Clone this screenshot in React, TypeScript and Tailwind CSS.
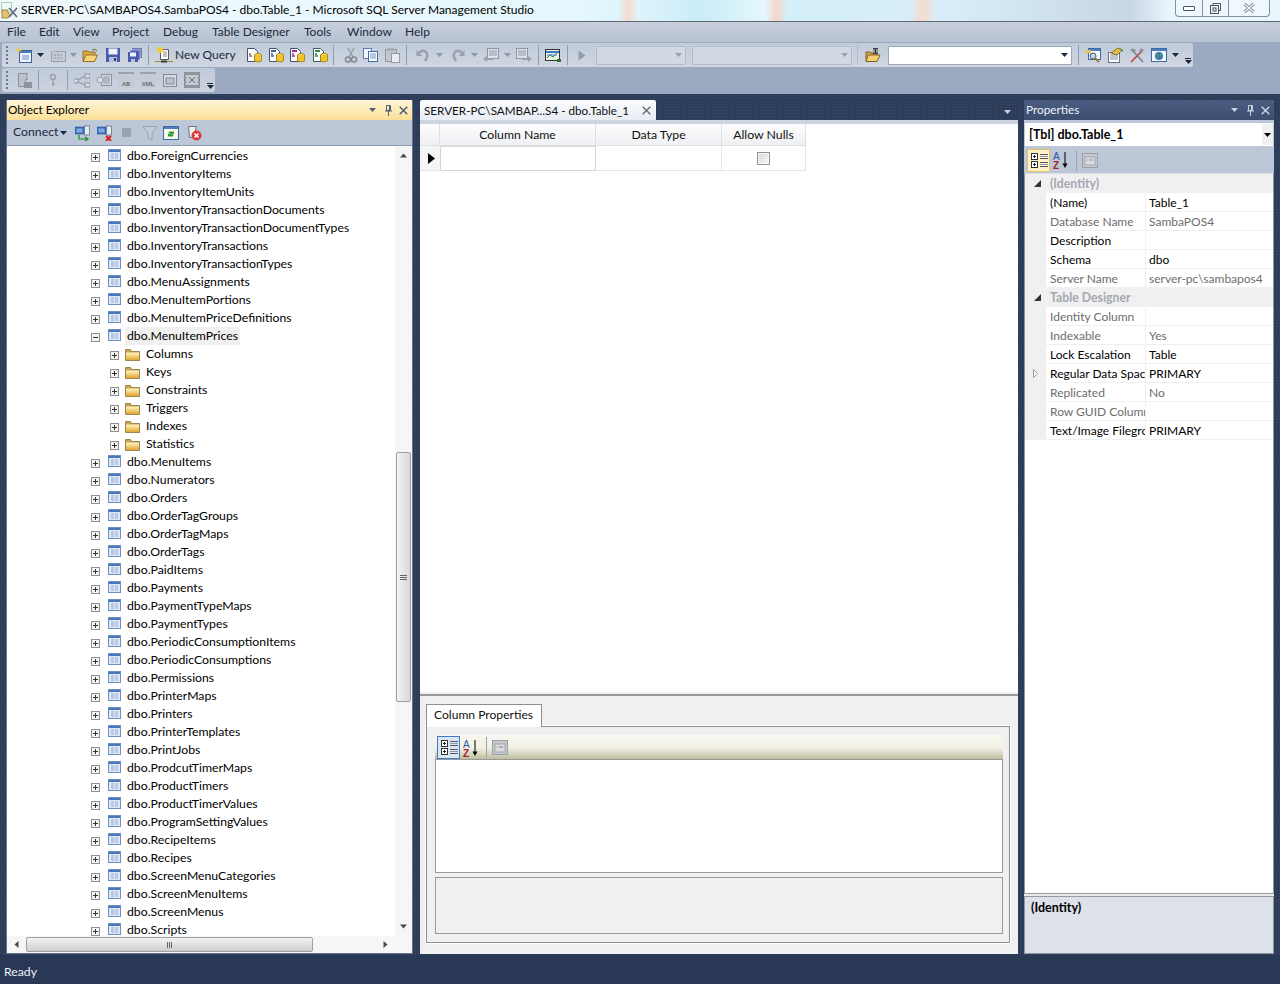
import React from 'react';

const tables: [string, boolean?][] = [
  ['ForeignCurrencies'], ['InventoryItems'], ['InventoryItemUnits'], ['InventoryTransactionDocuments'], ['InventoryTransactionDocumentTypes'],
  ['InventoryTransactions'], ['InventoryTransactionTypes'], ['MenuAssignments'], ['MenuItemPortions'], ['MenuItemPriceDefinitions'], ['MenuItemPrices', true],
];
const folders = ['Columns', 'Keys', 'Constraints', 'Triggers', 'Indexes', 'Statistics'];
const tables2 = ['MenuItems', 'Numerators', 'Orders', 'OrderTagGroups', 'OrderTagMaps', 'OrderTags', 'PaidItems', 'Payments', 'PaymentTypeMaps', 'PaymentTypes', 'PeriodicConsumptionItems', 'PeriodicConsumptions', 'Permissions', 'PrinterMaps', 'Printers', 'PrinterTemplates', 'PrintJobs', 'ProdcutTimerMaps', 'ProductTimers', 'ProductTimerValues', 'ProgramSettingValues', 'RecipeItems', 'Recipes', 'ScreenMenuCategories', 'ScreenMenuItems', 'ScreenMenus', 'Scripts'];

const props: [string, string, boolean, boolean?][] = [
  ['(Name)', 'Table_1', true], ['Database Name', 'SambaPOS4', false], ['Description', '', true], ['Schema', 'dbo', true], ['Server Name', 'server-pc\\sambapos4', false],
];
const props2: [string, string, boolean, boolean?][] = [
  ['Identity Column', '', false], ['Indexable', 'Yes', false], ['Lock Escalation', 'Table', true], ['Regular Data Space', 'PRIMARY', true, true], ['Replicated', 'No', false], ['Row GUID Column', '', false], ['Text/Image Filegroup', 'PRIMARY', true],
];

const Box = ({ open }: { open?: boolean }) => (
  <svg width="9" height="9" viewBox="0 0 9 9" className="shrink-0 mt-[2px]">
    <rect x=".5" y=".5" width="8" height="8" fill="#f4f4f4" stroke="#8f8f8f" />
    <path d={open ? 'M2 4.500h5' : 'M2 4.500h5M4.500 2v5'} stroke="#333" />
  </svg>
);
const TableIco = () => (
  <svg width="13" height="12" viewBox="0 0 13 12" className="shrink-0 -mt-[2px] block">
    <rect x=".5" y=".5" width="12" height="11" fill="#dde7f5" stroke="#6f8fc0" />
    <rect x="1" y="1" width="11" height="2" fill="#4a78bd" />
    <path d="M3 5h3M7 5h3M3 7h3M7 7h3M3 9h3M7 9h3" stroke="#92abd2" />
  </svg>
);
const FolderIco = () => (
  <svg width="15" height="13" viewBox="0 0 15 13" className="shrink-0 block">
    <defs><linearGradient id="fg" x1="0" y1="0" x2="0" y2="1"><stop offset="0" stopColor="#fff6c4" /><stop offset="1" stopColor="#e0a62e" /></linearGradient></defs>
    <path d="M.5 12.500V1.500h5l1 2h8v9z" fill="#c9a24a" stroke="#9b8550" />
    <path d="M1 4.500h13V12H1z" fill="url(#fg)" />
  </svg>
);

const Tri = ({ c = '#1b293e', className = '' }: { c?: string; className?: string }) => (
  <svg width="7" height="4" viewBox="0 0 7 4" className={`shrink-0 ${className}`}><path d="M0 0h7L3.500 4z" fill={c} /></svg>
);
const Sep = ({ cls }: { cls: string }) => <div className={`w-px h-[20px] bg-[#8e9bb0] shrink-0 ${cls}`} />;
const Grip = () => (
  <div className="w-[3px] h-[18px] ml-[4px] shrink-0 flex flex-col justify-between">
    {[0, 1, 2, 3, 4].map((i) => <div key={i} className="w-[2px] h-[2px] bg-[#6d7b92]" />)}
  </div>
);
const Overflow = ({ cls = '' }: { cls?: string }) => (
  <div className={`w-[8px] flex flex-col items-center gap-[1px] self-end mb-[3px] shrink-0 ${cls}`}>
    <div className="w-[6px] h-px bg-[#1b293e]" />
    <Tri />
  </div>
);

type I = { cls?: string };
const S = ({ cls = '', w = 16, h = 16, children }: I & { w?: number; h?: number; children: React.ReactNode }) => (
  <svg width={w} height={h} viewBox={`0 0 ${w} ${h}`} className={`shrink-0 ${cls}`}>{children}</svg>
);
const NewProj = ({ cls }: I) => <S cls={cls}><rect x="3.500" y="3.500" width="12" height="12" fill="#eef3fa" stroke="#3b5f97" /><rect x="4" y="4" width="11" height="2" fill="#4f7cc0" /><path d="M6 8h7v5H6z" fill="#a9c1e4" /><path d="M3 0l1 2 2 1-2 1-1 2-1-2-2-1 2-1z" fill="#f4c430" /></S>;
const GridD = ({ cls }: I) => <S cls={cls}><rect x="1.500" y="4.500" width="14" height="10" fill="#c5cbd6" stroke="#9a9fa8" /><path d="M4 8h9M4 11h9" stroke="#8d939d" strokeDasharray="2 1" /><path d="M3 1l1 2 2 1-2 1-1-1-1 1-1-1 1-1z" fill="#c9ccd1" /></S>;
const Open = ({ cls }: I) => <S cls={cls}><path d="M1 14V4h5l1 1h6v3" fill="#dca93c" stroke="#94702a" /><path d="M1 14.500 4 8h11.500l-3 6.500z" fill="#f6d778" stroke="#94702a" /><path d="M10 3q3-2 5 1" stroke="#4a7b3a" fill="none" /></S>;
const Save = ({ cls }: I) => <S cls={cls}><rect x="1" y="1" width="14" height="14" fill="#4a58ad" /><rect x="3.500" y="1.500" width="9" height="6" fill="#eef1fa" /><rect x="4" y="10" width="8" height="5" fill="#b7bdd6" /><rect x="9" y="11" width="2" height="3" fill="#333a73" /></S>;
const SaveAll = ({ cls }: I) => <S cls={cls}><rect x="5" y="1" width="10" height="10" fill="#6f7cba" /><rect x="3" y="3" width="10" height="10" fill="#5262ae" stroke="#eef1fa" strokeWidth=".5" /><rect x="1" y="5" width="10" height="10" fill="#4a58ad" /><rect x="3" y="5.500" width="6" height="4" fill="#eef1fa" /><rect x="4" y="12" width="4" height="3" fill="#b7bdd6" /></S>;
const NewQ = ({ cls }: I) => <S w={18} h={18} cls={cls}><path d="M5.500 3.500h8v10h-8z" fill="#fff" stroke="#5b5b5b" /><path d="M8 6h4M8 8h4M8 10h4" stroke="#888" /><circle cx="5" cy="4" r="3" fill="#f7c831" /><path d="M0 15.500h18" stroke="#a8882c" /><path d="M6 15.500h6" stroke="#3d3d3d" strokeWidth="2" /></S>;
const DocDb = ({ cls, c, t }: I & { c: string; t?: boolean }) => <S cls={cls}><path d="M1.500 1.500h7l3 3v10h-10z" fill="#fff" stroke="#46536b" />{t ? <path d="M3 4h5" stroke={c} strokeWidth="2" /> : null}<path d="M3 7h2M3 9h3" stroke={c} strokeWidth="1.500" /><ellipse cx="12" cy="8" rx="3.500" ry="1.500" fill="#f9df6f" stroke="#a88b22" /><path d="M8.500 8v6q3.500 2 7 0V8" fill="#efc52d" stroke="#a88b22" /></S>;
const Cut = ({ cls }: I) => <S cls={cls}><path d="M5 1l5 9M11 1 6 10" stroke="#9aa0aa" strokeWidth="1.500" /><circle cx="5" cy="12.500" r="2.500" fill="none" stroke="#838a96" strokeWidth="1.500" /><circle cx="11" cy="12.500" r="2.500" fill="none" stroke="#838a96" strokeWidth="1.500" /></S>;
const Copy = ({ cls }: I) => <S cls={cls}><rect x="1.500" y="1.500" width="8" height="10" fill="#f1f5fb" stroke="#5b7fb5" /><rect x="6.500" y="4.500" width="9" height="10" fill="#fff" stroke="#3f69a8" /><path d="M8 7h6M8 9h6M8 11h6" stroke="#6f8ebe" /></S>;
const Paste = ({ cls }: I) => <S cls={cls}><rect x="1.500" y="2.500" width="11" height="12" fill="#c2c7ce" stroke="#90959d" /><rect x="4" y="1" width="6" height="3" fill="#a9aeb6" /><rect x="7.500" y="6.500" width="8" height="9" fill="#e8ebef" stroke="#959aa2" /></S>;
const Undo = ({ cls, flip }: I & { flip?: boolean }) => <S cls={`${cls} ${flip ? '-scale-x-100' : ''}`}><path d="M5 7 1.500 3 1.500 9h6z" fill="#98a0ad" /><path d="M4 6q4-4 7-1t-1 9" fill="none" stroke="#98a0ad" strokeWidth="2.500" /></S>;
const ListL = ({ cls, flip }: I & { flip?: boolean }) => <S cls={`${cls} ${flip ? '-scale-x-100' : ''}`}><rect x="4.500" y="1.500" width="11" height="10" fill="#dfe3e9" stroke="#8f96a3" /><path d="M6 4h8M6 6h8M6 8h8" stroke="#8f96a3" /><path d="M0 12l4-3v2h6v2H4v2z" fill="#98a0ad" /></S>;
const Chart = ({ cls }: I) => <S cls={cls}><rect x=".5" y="2.500" width="14" height="11" fill="#e9f4e5" stroke="#333" /><path d="M1 5h13" stroke="#3b7bc6" strokeWidth="2" /><path d="M2 11l3-3 3 2 4-4" stroke="#2d8c3c" fill="none" /><path d="M2 8h10" stroke="#3b7bc6" /><path d="M12 12h4v3h-4z" fill="#2d6c2d" /></S>;
const Play = ({ cls }: I) => <svg width="8" height="11" viewBox="0 0 8 11" className={`shrink-0 ${cls}`}><path d="M.5.500 7.500 5.500.500 10.500z" fill="#929cac" /></svg>;
const Combo = ({ cls, white }: I & { white?: boolean }) => (
  <div className={`h-[19px] border flex items-center justify-end pr-[2px] rounded-[1px] shrink-0 ${white ? 'bg-white border-[#9aa7bd]' : 'bg-[#d2d9e4] border-[#b2bccd]'} ${cls}`}>
    <Tri c={white ? '#1b293e' : '#98a2b2'} className="mr-[1px]" />
  </div>
);
const FolderFind = ({ cls }: I) => <S cls={cls}><path d="M1 14V5h4l1 1h6v8z" fill="#dca93c" stroke="#7d5e24" /><path d="M1 14.500 3 8h12l-3 6.500z" fill="#f2cf70" stroke="#7d5e24" /><path d="M8 1h5v6H8z" fill="#3a3a3a" /><path d="M9 2v4M12 2v4" stroke="#d8d8d8" /></S>;
const FindW = ({ cls }: I) => <S cls={cls}><rect x="3.500" y="1.500" width="12" height="11" fill="#f5f7fb" stroke="#3d6aa8" /><rect x="4" y="2" width="11" height="2" fill="#4f7cc0" /><path d="M0 3h6v3H0z" fill="#e6be5b" /><circle cx="8" cy="9" r="3" fill="#bcd7ef" stroke="#46586f" /><path d="M10 11l4 4" stroke="#a27a28" strokeWidth="2" /></S>;
const PropsI = ({ cls }: I) => <S cls={cls}><rect x="1.500" y="5.500" width="11" height="10" fill="#fff" stroke="#6b7280" /><path d="M3 8h8M3 10h8M3 12h8" stroke="#7c8ca5" /><path d="M4 6l7-5 4 2-5 5z" fill="#e5bd4f" stroke="#8a6c1f" /><path d="M12 1l4 2v2z" fill="#3c8d3c" /></S>;
const Tools = ({ cls }: I) => <S cls={cls}><path d="M2 15 12 5" stroke="#c9342d" strokeWidth="1.500" /><path d="M14 15 5 5" stroke="#777d86" strokeWidth="1.500" /><path d="M1 3q3-3 6 0l-2 3zM15 3l-3-2-2 3 3 2z" fill="#8a9099" /></S>;
const Globe = ({ cls }: I) => <S cls={cls}><rect x=".5" y="1.500" width="15" height="13" fill="#f4f7fb" stroke="#3d6aa8" /><rect x="1" y="2" width="14" height="2" fill="#4f7cc0" /><circle cx="8" cy="9" r="4" fill="#3b76bd" /><path d="M6 7q2 0 2 2t-2 2zM9 6l2 2-2 1z" fill="#54a94c" /></S>;

const Toolbar1 = () => (
  <div className="h-[24px] w-[1191px] ml-[2px] flex items-center bg-[linear-gradient(#c0cad9,#d0d7e2)] rounded-[2px]">
    <Grip />
    <NewProj cls="ml-[7px]" /><Tri className="ml-[5px]" />
    <GridD cls="ml-[6px]" /><Tri c="#8d97a7" className="ml-[4px]" />
    <Open cls="ml-[5px]" /><Save cls="ml-[7px]" /><SaveAll cls="ml-[6px]" />
    <Sep cls="ml-[5px]" />
    <NewQ cls="ml-[6px]" />
    <span className="ml-[2px] w-[59px] text-[#1b293e] text-[12px] whitespace-nowrap">New Query</span>
    <DocDb c="#777" cls="ml-[12px]" /><DocDb c="#3a5fb5" t cls="ml-[6px]" /><DocDb c="#a0329a" t cls="ml-[5px]" /><DocDb c="#2e8b3c" t cls="ml-[7px]" />
    <Sep cls="ml-[5px]" />
    <Cut cls="ml-[9px]" /><Copy cls="ml-[3px]" /><Paste cls="ml-[6px]" />
    <Sep cls="ml-[6px]" />
    <Undo cls="ml-[8px]" /><Tri c="#8d97a7" className="ml-[5px]" />
    <Undo flip cls="ml-[7px]" /><Tri c="#8d97a7" className="ml-[5px]" />
    <ListL cls="ml-[5px]" /><Tri c="#8d97a7" className="ml-[5px]" />
    <ListL flip cls="ml-[5px]" />
    <Sep cls="ml-[6px]" />
    <Chart cls="ml-[6px]" />
    <Sep cls="ml-[6px]" />
    <Play cls="ml-[10px]" />
    <Combo cls="ml-[10px] w-[90px]" />
    <Combo cls="ml-[6px] w-[160px]" />
    <Sep cls="ml-[5px] bg-[#b2bccd]" />
    <FolderFind cls="ml-[7px]" />
    <Combo white cls="ml-[7px] w-[184px]" />
    <Sep cls="ml-[6px]" />
    <FindW cls="ml-[6px]" /><PropsI cls="ml-[6px]" /><Tools cls="ml-[6px]" /><Globe cls="ml-[6px]" /><Tri className="ml-[5px]" />
    <Overflow cls="ml-[5px]" />
  </div>
);

const Dis = ({ children, cls }: I & { children: React.ReactNode }) => (
  <div className={`w-[16px] h-[16px] bg-[#c6ccd7] border-t-2 border-[#9ba2ad] flex items-end justify-center font-['Liberation_Sans'] text-[6px] leading-[7px] text-[#444] shrink-0 ${cls}`}>{children}</div>
);
const Toolbar2 = () => (
  <div className="h-[24px] w-[213px] ml-[2px] mt-[1px] flex items-center bg-[linear-gradient(#c0cad9,#ccd3df)] rounded-[2px]">
    <Grip />
    <S cls="ml-[7px]"><path d="M2.500 1.500h9q-2 3 0 6h-2v7h-7z" fill="#bbc2cd" stroke="#8b929d" /><rect x="8" y="10" width="8" height="6" fill="#8d949e" /></S>
    <Sep cls="ml-[6px]" />
    <S cls="ml-[6px]"><circle cx="8" cy="5" r="2.500" fill="none" stroke="#9aa2ae" strokeWidth="1.500" /><path d="M8 7v7M8 12h2" stroke="#9aa2ae" strokeWidth="1.500" /></S>
    <Sep cls="ml-[6px]" />
    <S cls="ml-[6px]"><rect x="0" y="7" width="4" height="4" fill="#dde" stroke="#8b929d" /><rect x="11" y="2" width="5" height="4" fill="#dde" stroke="#8b929d" /><rect x="11" y="11" width="5" height="4" fill="#dde" stroke="#8b929d" /><path d="M4 8l7-4M4 10l7 3" stroke="#8b929d" /></S>
    <S cls="ml-[6px]"><rect x="5.500" y="2.500" width="10" height="11" fill="#d7dce4" stroke="#8b929d" /><path d="M7 5h7M7 7h7M7 9h7M7 11h7" stroke="#8b929d" /><circle cx="4" cy="8" r="3" fill="#d7dce4" stroke="#9aa2ae" /></S>
    <Dis cls="ml-[6px]">AB</Dis>
    <Dis cls="ml-[6px]">XML</Dis>
    <S cls="ml-[6px]"><rect x="1.500" y="2.500" width="13" height="12" fill="#d4d9e1" stroke="#858c97" /><path d="M4 6h8v6H4z" fill="#bcc3ce" stroke="#858c97" /></S>
    <S cls="ml-[6px]"><rect x="0" y="0" width="16" height="16" fill="#8d949e" /><rect x="2" y="3" width="12" height="10" fill="#c4cad4" /><path d="M5 5l6 6M11 5l-6 6" stroke="#666" /></S>
    <Overflow cls="ml-[6px]" />
  </div>
);

const PaneBtns = ({ light }: { light?: boolean }) => {
  const c = light ? '#c9d2e1' : '#4f5e76';
  return (
    <div className="flex items-center ml-auto mr-[2px]">
      <Tri c={c} className="mr-[8px]" />
      <svg width="9" height="11" viewBox="0 0 9 11" className="mr-[6px]"><path d="M2.500.500h4v5h-4zM1 6h7M4.500 6v5M5.500 1v4" stroke={c} fill="none" /></svg>
      <svg width="9" height="9" viewBox="0 0 9 9" className="mr-[1px]"><path d="M.7.700l7.600 7.600M8.300.700.700 8.300" stroke={c} strokeWidth="1.500" /></svg>
    </div>
  );
};

const Row = ({ name, open }: { name: string; open?: boolean }) => (
  <div className="h-[18px] pl-[84px] flex items-center shrink-0">
    <Box open={open} />
    <div className="ml-[8px]"><TableIco /></div>
    <span className={`ml-[4px] h-[18px] text-[#000] px-[2px] whitespace-nowrap leading-[18px] ${open ? 'bg-[#f0f0f0]' : ''}`}>dbo.{name}</span>
  </div>
);
const Arrow = ({ d, cls = '' }: { d: string; cls?: string }) => (
  <svg width="7" height="7" viewBox="0 0 7 7" className={cls}><path d={d} fill="#4a4a4a" /></svg>
);
const Monitor = () => (
  <>
    <rect x="0" y="2" width="9" height="7" fill="#3c6fc0" stroke="#2a4d86" strokeWidth=".6" />
    <rect x="1.500" y="3.500" width="6" height="4" fill="#7fa8e0" />
    <rect x="9.500" y="1" width="5" height="9" fill="#e4eaf3" stroke="#57657c" strokeWidth=".7" />
  </>
);

const ObjectExplorer = () => (
  <section className="w-[407px] ml-[6px] flex flex-col shrink-0 border-x border-b border-[#8e9bb0]/60">
    <div className="h-[20px] flex items-center pl-[1px] pr-[1px] bg-[linear-gradient(#fff6d8,#fbdf96)] text-black">
      <span className="text-[11.75px]">Object Explorer</span> <PaneBtns />
    </div>
    <div className="h-[26px] bg-[#bcc7d8] flex items-center pl-[6px] border-b border-[#8e9bb0]">
      <span className="text-[#1b293e] w-[47px] mb-[2px] whitespace-nowrap">Connect</span><Tri />
      <S cls="ml-[8px]"><Monitor /><path d="M4 10v4h8M10 12l3 2-3 2" stroke="#1f8c2c" strokeWidth="1.200" fill="none" /></S>
      <S cls="ml-[6px]"><Monitor /><path d="M9 11l5 5M14 11l-5 5" stroke="#d51f1f" strokeWidth="2" /></S>
      <div className="w-[9px] h-[9px] bg-[#98a2b2] ml-[9px]" />
      <S cls="ml-[11px]"><path d="M1 1.500h14L10 8v7l-4-2V8z" fill="#c5ccd7" stroke="#98a2b2" /></S>
      <S cls="ml-[5px]"><rect x=".5" y="1.500" width="15" height="13" fill="#f8f8e8" stroke="#3d6aa8" /><rect x="1" y="2" width="14" height="2" fill="#4f7cc0" /><path d="M5 8q2-3 5-1l1-1v3H8zM11 10q-2 3-5 1l-1 1V9h3z" fill="#2d9a37" /></S>
      <S cls="ml-[7px]"><path d="M2.500 1.500h8q-2 4 0 8v3h-7z" fill="#f0f0f0" stroke="#6b7280" /><circle cx="10.500" cy="10.500" r="5" fill="#d93a3a" /><path d="M8.500 8.500l4 4M12.500 8.500l-4 4" stroke="#fff" strokeWidth="1.500" /></S>
    </div>
    <div className="flex-1 flex min-h-0 bg-white">
      <div className="flex-1 overflow-hidden flex flex-col pt-[1px] min-w-0">
        {tables.map(([n, o]) => <Row key={n} name={n} open={o} />)}
        {folders.map((f) => (
          <div key={f} className="h-[18px] pl-[103px] flex items-center shrink-0">
            <Box /><div className="ml-[6px]"><FolderIco /></div>
            <span className="ml-[6px] h-[18px] leading-[18px] whitespace-nowrap">{f}</span>
          </div>
        ))}
        {tables2.map((n) => <Row key={n} name={n} />)}
      </div>
      <div className="w-[17px] flex flex-col items-center bg-[#f6f6f6] shrink-0">
        <Arrow d="M3.500 1.500 7 5.500H0z" cls="mt-[6px]" />
        <div className="w-[15px] h-[250px] mt-[293px] bg-[linear-gradient(90deg,#f3f3f3,#d8d8d8)] border border-[#a0a0a0] rounded-[2px] flex flex-col items-center justify-center gap-px">
          <div className="w-[7px] h-px bg-[#666]" /><div className="w-[7px] h-px bg-[#666]" /><div className="w-[7px] h-px bg-[#666]" />
        </div>
        <Arrow d="M0 1.500h7L3.500 5.500z" cls="mt-auto mb-[6px]" />
      </div>
    </div>
    <div className="h-[17px] bg-[#f6f6f6] flex items-center pr-[17px] shrink-0">
      <Arrow d="M1.500 3.500 5.500 0v7z" cls="ml-[6px]" />
      <div className="w-[287px] h-[15px] ml-[6px] bg-[linear-gradient(#f3f3f3,#cfcfcf)] border border-[#a0a0a0] rounded-[2px] flex items-center justify-center gap-px">
        <div className="w-px h-[6px] bg-[#666]" /><div className="w-px h-[6px] bg-[#666]" /><div className="w-px h-[6px] bg-[#666]" />
      </div>
      <Arrow d="M1.500 0 5.500 3.500 1.500 7z" cls="ml-auto mr-[6px]" />
    </div>
  </section>
);

const PropToolbarIcons = ({ blue }: { blue?: boolean }) => (
  <>
    <div className={`w-[23px] h-[23px] flex flex-col justify-center gap-[1px] pl-[3px] border shrink-0 ${blue ? 'border-[#3d79c5] bg-[#dbe6f3]' : 'border-[#e5c365] bg-[#fff2c8]'}`}>
      {[0, 1].map((i) => (
        <div key={i} className="flex items-center gap-[2px]">
          <svg width="7" height="7" viewBox="0 0 7 7"><rect x=".5" y=".5" width="6" height="6" fill="#fff" stroke="#333" /><path d="M2 3.500h3M3.500 2v3" stroke="#222" /></svg>
          <div className="flex flex-col gap-px"><div className="w-[8px] h-px bg-[#556]" /><div className="w-[8px] h-px bg-[#89a]" /><div className="w-[8px] h-px bg-[#556]" /></div>
        </div>
      ))}
    </div>
    <svg width="18" height="20" viewBox="0 0 18 20" className="ml-[1px] shrink-0">
      <text x="2" y="10" fontSize="10" fontFamily="'Liberation Sans'" fill="#2f55a5">A</text>
      <text x="2" y="19" fontSize="10" fontFamily="'Liberation Sans'" fontWeight="700" fill="#a02828">Z</text>
      <path d="M14 2v14" stroke="#000" /><path d="M11.500 13.500h5L14 18z" fill="#000" />
    </svg>
    <div className="w-px h-[21px] bg-[#9aa5b7] ml-[7px] shrink-0" />
    <svg width="16" height="15" viewBox="0 0 16 15" className="ml-[5px] shrink-0"><rect x=".5" y=".5" width="15" height="14" fill="#c5c9cf" stroke="#9a9fa8" /><rect x="3" y="4" width="10" height="8" fill="#d9dce0" stroke="#a4a8ae" /><path d="M5 7h1M7 7h4" stroke="#888" /></svg>
  </>
);

const Document = () => (
  <section className="w-[598px] ml-[7px] flex flex-col shrink-0">
    <div className="h-[20px] flex items-center relative">
      <div className="w-[236px] h-[20px] bg-[linear-gradient(#fbfcfe,#e8edf4)] rounded-t-[2px] flex items-center pl-[4px] whitespace-nowrap text-[#111]">
        <span className="text-[11.7px]">SERVER-PC\SAMBAP...S4 - dbo.Table_1</span>
        <svg width="9" height="9" viewBox="0 0 9 9" className="ml-auto mr-[5px]"><path d="M.7.700l7.600 7.600M8.300.700.700 8.300" stroke="#5e6674" strokeWidth="1.300" /></svg>
      </div>
      <Tri c="#c9d2e1" className="ml-auto mr-[7px] mt-[3px]" />
    </div>
    <div className="h-[4px] bg-[#ced4df]" />
    <div className="h-[568px] bg-white flex flex-col shrink-0">
      <div className="flex h-[22px] text-[#111] text-center">
        <div className="w-[20px] bg-[linear-gradient(#fdfdfd,#eef0f3)] border-r border-b border-[#dcdfe4]" />
        <div className="w-[156px] leading-[22px] bg-[linear-gradient(#fdfdfd,#eef0f3)] border-r border-b border-[#dcdfe4]">Column Name</div>
        <div className="w-[126px] leading-[22px] bg-[linear-gradient(#fdfdfd,#eef0f3)] border-r border-b border-[#dcdfe4]">Data Type</div>
        <div className="w-[84px] leading-[22px] bg-[linear-gradient(#fdfdfd,#eef0f3)] border-r border-b border-[#dcdfe4]">Allow Nulls</div>
      </div>
      <div className="flex h-[25px]">
        <div className="w-[20px] flex items-center pl-[8px] bg-[#f4f5f7] border-b border-[#e6e6e6]">
          <svg width="7" height="11" viewBox="0 0 7 11"><path d="M0 0l7 5.500L0 11z" fill="#000" /></svg>
        </div>
        <div className="w-[156px] border border-[#d5d5d5] rounded-[1px]" />
        <div className="w-[126px] border-r border-b border-[#e6e6e6]" />
        <div className="w-[84px] border-r border-b border-[#e6e6e6] flex items-center justify-center">
          <div className="w-[13px] h-[13px] border border-[#8e8f8f] bg-[linear-gradient(135deg,#d8d8d8,#f6f6f6)] outline outline-1 -outline-offset-2 outline-white/70" />
        </div>
      </div>
    </div>
    <div className="h-[4px] bg-[#f0f0f0] border-b-2 border-[#9a9a9a]" />
    <div className="flex-1 bg-[#f0f0f0] flex flex-col pl-[6px] pr-[8px] pt-[8px] pb-[11px] min-h-0">
      <div className="flex h-[22px] shrink-0">
        <div className="w-[116px] bg-white border border-b-0 border-[#8f8f8f] flex items-center pl-[7px] pb-[2px] text-[#111] text-[12.1px] whitespace-nowrap rounded-t-[1px] relative z-10 -mb-px">Column Properties</div>
      </div>
      <div className="flex-1 border border-[#8f8f8f] outline-1 outline-white flex flex-col pl-[8px] pr-[6px] pt-[8px] pb-[8px] min-h-0">
        <div className="h-[24px] flex items-center pl-[2px] pt-[1px] bg-[linear-gradient(#f9f8f0,#f1f0e2_55%,#bebda0)] rounded-t-[2px] shrink-0">
          <PropToolbarIcons blue />
        </div>
        <div className="h-[114px] bg-white border border-[#9a9a9a] shrink-0" />
        <div className="flex-1 mt-[4px] border border-[#9a9a9a] bg-[#f0f0f0]" />
      </div>
    </div>
  </section>
);

const PropRow = ({ n, v, on, exp }: { n: string; v: string; on: boolean; exp?: boolean }) => {
  const c = on ? 'text-black' : 'text-[#6d6d6d]';
  return (
    <div className="h-[19px] flex text-[12px]">
      <div className="w-[21px] bg-[#f0f0f0] flex items-center justify-center shrink-0">
        {exp ? <svg width="5" height="9" viewBox="0 0 5 9"><path d="M.5.500 4.500 4.500.500 8.500z" fill="#fff" stroke="#9a9a9a" /></svg> : null}
      </div>
      <div className={`w-[100px] pl-[4px] border-r border-b border-[#f0f0f0] overflow-hidden whitespace-nowrap leading-[20px] ${c}`}>{n}</div>
      <div className={`flex-1 pl-[3px] border-b border-[#f0f0f0] whitespace-nowrap leading-[20px] ${c}`}>{v}</div>
    </div>
  );
};
const GroupRow = ({ n }: { n: string }) => (
  <div className="h-[19px] flex items-center bg-[#f0f0f0]">
    <svg width="7" height="7" viewBox="0 0 7 7" className="ml-[9px]"><path d="M7 0v7H0z" fill="#333" /></svg>
    <span className="ml-[9px] font-bold text-[#a3a8b2]">{n}</span>
  </div>
);

const Properties = () => (
  <section className="w-[250px] ml-[6px] flex flex-col shrink-0">
    <div className="h-[20px] flex items-center pl-[2px] pr-[1px] bg-[linear-gradient(#4b5e82,#3c4e70)] text-[#eef2f8]">
      <span className="text-[11.75px]">Properties</span> <PaneBtns light />
    </div>
    <div className="h-[27px] bg-[#bcc7d8] pt-[3px] pb-[1px] px-[1px] shrink-0">
      <div className="h-[23px] bg-white flex items-center pl-[4px] font-bold text-[12.5px] text-black leading-[21px]">
        [Tbl] dbo.Table_1
        <div className="ml-auto w-[11px] h-[21px] bg-[#f0f0f0] flex items-center justify-center"><Tri c="#000" /></div>
      </div>
    </div>
    <div className="h-[26px] bg-[#bcc7d8] flex items-center pl-[3px] shrink-0"><PropToolbarIcons /></div>
    <div className="h-[720px] bg-white flex flex-col border-x border-[#8f96a2] shrink-0">
      <div className="h-px bg-[#d8dde6]" />
      <GroupRow n="(Identity)" />
      {props.map(([n, v, on, e]) => <PropRow key={n} n={n} v={v} on={on} exp={e} />)}
      <GroupRow n="Table Designer" />
      {props2.map(([n, v, on, e]) => <PropRow key={n} n={n} v={v} on={on} exp={e} />)}
    </div>
    <div className="h-[4px] bg-[#e8ebf0] border-y border-[#9a9a9a] shrink-0" />
    <div className="flex-1 bg-[#dde1e9] border-x border-b border-[#8f96a2] pl-[6px] pt-[3px] font-bold text-[12.5px] text-black">(Identity)</div>
  </section>
);

export default function App() {
  return (
    <div className="w-[1280px] h-[984px] overflow-hidden flex flex-col text-[12.25px] leading-[16px] font-['Lato','Noto_Sans',sans-serif] bg-[#293955]">
      <header className="h-[22px] shrink-0 flex items-start border-b border-[#62686f] bg-[linear-gradient(90deg,#eef8fd_0,#e6f8fd_560px,#dff5fb_618px,#f6d9cf_628px,#dff4fb_638px,#c9ecf9_700px,#e4f7fc_765px,#f5d6ca_776px,#d3eff9_788px,#d8eff9_910px,#f6dace_923px,#d8effa_937px,#c9d6e6_1130px,#e9f6fc_1170px)]">
        <svg width="18" height="18" viewBox="0 0 18 18" className="ml-[1px] mt-[2px] shrink-0">
          <rect x=".5" y=".5" width="10" height="10" fill="none" stroke="#6fa84f" strokeDasharray="1 1" />
          <path d="M1 8h6v3l2 2-2 3H1z" fill="#e5c56b" stroke="#8a6c2a" strokeWidth=".7" />
          <path d="M8 6l8 9M16 6l-8 9" stroke="#64707f" strokeWidth="1.800" />
        </svg>
        <span className="ml-[2px] mt-[2px] text-black text-[12px] whitespace-nowrap">SERVER-PC\SAMBAPOS4.SambaPOS4 - dbo.Table_1 - Microsoft SQL Server Management Studio</span>
        <div className="ml-auto mr-[10px] h-[17px] flex border-x border-b border-[#8a8f96] rounded-b-[4px] bg-white/30">
          <div className="w-[27px] flex items-center justify-center border-r border-[#8a8f96]"><div className="w-[12px] h-[5px] border border-[#4a5361] bg-white/70 rounded-[1px]" /></div>
          <div className="w-[26px] flex items-center justify-center border-r border-[#8a8f96]">
            <svg width="11" height="11" viewBox="0 0 11 11"><path d="M3 2.500V.5h7.500v7H8.500" fill="none" stroke="#4a5361" /><rect x=".5" y="2.500" width="8" height="8" fill="#eef3f7" stroke="#4a5361" /><rect x="3" y="5" width="3" height="3" fill="none" stroke="#4a5361" /></svg>
          </div>
          <div className="w-[40px] flex items-center justify-center">
            <svg width="12" height="10" viewBox="0 0 12 10"><path d="M1.500 1 10.500 9M10.500 1 1.500 9" stroke="#6a7280" strokeWidth="3" /><path d="M1.500 1 10.500 9M10.500 1 1.500 9" stroke="#fff" strokeWidth="1.300" /></svg>
          </div>
        </div>
      </header>
      <nav className="h-[20px] shrink-0 flex items-start pt-[2px] pl-[7px] bg-[linear-gradient(#c7cfdc,#b7c1d2)] text-[#1b293e] text-[12px]">
        <span className="w-[32px]">File</span><span className="w-[34px]">Edit</span><span className="w-[39px]">View</span><span className="w-[51px]">Project</span><span className="w-[49px]">Debug</span><span className="w-[92px]">Table Designer</span><span className="w-[43px]">Tools</span><span className="w-[58px]">Window</span><span>Help</span>
      </nav>
      <div className="h-[52px] shrink-0 bg-[#9caac1] pt-[1px]">
        <Toolbar1 />
        <Toolbar2 />
      </div>
      <main className="flex-1 min-h-0 flex pt-[6px] pb-[1px] bg-[#2c3c59] bg-[radial-gradient(#3a4c6c_0.5px,transparent_0.6px)] bg-[length:3px_3px]">
        <ObjectExplorer />
        <Document />
        <Properties />
      </main>
      <footer className="h-[29px] shrink-0 flex items-center pl-[4px] pt-[5px] bg-[#293955] text-[#eef2f8]">Ready</footer>
    </div>
  );
}
